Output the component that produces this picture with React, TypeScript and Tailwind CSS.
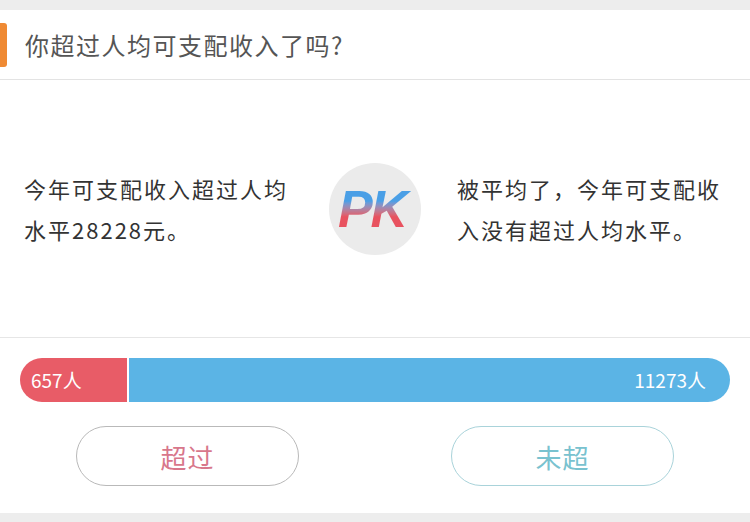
import React from 'react';

const font = "font-['Noto_Sans_CJK_SC','Noto_Sans',sans-serif]";

const App: React.FC = () => {
  const left = 657;
  const right = 11273;

  return (
    <div className={`w-[750px] h-[522px] bg-[#ededed] pt-[10px] ${font}`}>
      <div className="bg-white h-[503px] flex flex-col">
        {/* Title */}
        <div className="h-[70px] flex items-center border-b border-[#e3e3e3]">
          <div className="w-[7px] h-[44px] bg-[#ef8a34] rounded-r-[3px]" />
          <h1 className="ml-[18px] text-[24px] tracking-[1.5px] text-[#555]">你超过人均可支配收入了吗?</h1>
        </div>

        {/* Options */}
        <div className="h-[258px] flex items-center border-b border-[#e6e6e6]">
          <p className="ml-[24px] w-[280px] text-[22px] leading-[41px] tracking-[2px] text-[#333]">
            今年可支配收入超过人均水平28228元。
          </p>
          <div className="ml-[25px] w-[92px] h-[92px] rounded-full bg-[#ebebeb] flex items-center justify-center shrink-0">
            <span className="text-[52px] font-bold italic leading-none tracking-[-2px] bg-linear-to-b from-[#4a9fe6] from-35% to-[#e8525f] to-65% bg-clip-text text-transparent font-['Liberation_Sans',sans-serif] pr-[6px]">
              PK
            </span>
          </div>
          <p className="ml-[36px] w-[280px] text-[22px] leading-[41px] tracking-[2px] text-[#333]">
            被平均了，今年可支配收入没有超过人均水平。
          </p>
        </div>

        {/* Result */}
        <div className="flex-1 pt-[20px]">
          <div className="mx-[20px] h-[44px] flex rounded-full overflow-hidden text-white text-[19px]">
            <div className="w-[107px] bg-[#e85c67] flex items-center pl-[11px]">{left}人</div>
            <div className="w-[2px] bg-white" />
            <div className="flex-1 bg-[#5bb4e5] flex items-center justify-end pr-[24px]">{right}人</div>
          </div>
          <div className="grid grid-cols-2 mt-[24px]">
            <div className="flex justify-center">
              <button className="w-[223px] h-[60px] rounded-full border border-[#b9b9b9] text-[26px] text-[#d8778b] tracking-[1px]">
                超过
              </button>
            </div>
            <div className="flex justify-center">
              <button className="w-[223px] h-[60px] rounded-full border border-[#a9d3da] text-[26px] text-[#79c2cf] tracking-[1px]">
                未超
              </button>
            </div>
          </div>
        </div>
      </div>
    </div>
  );
};

export default App;
